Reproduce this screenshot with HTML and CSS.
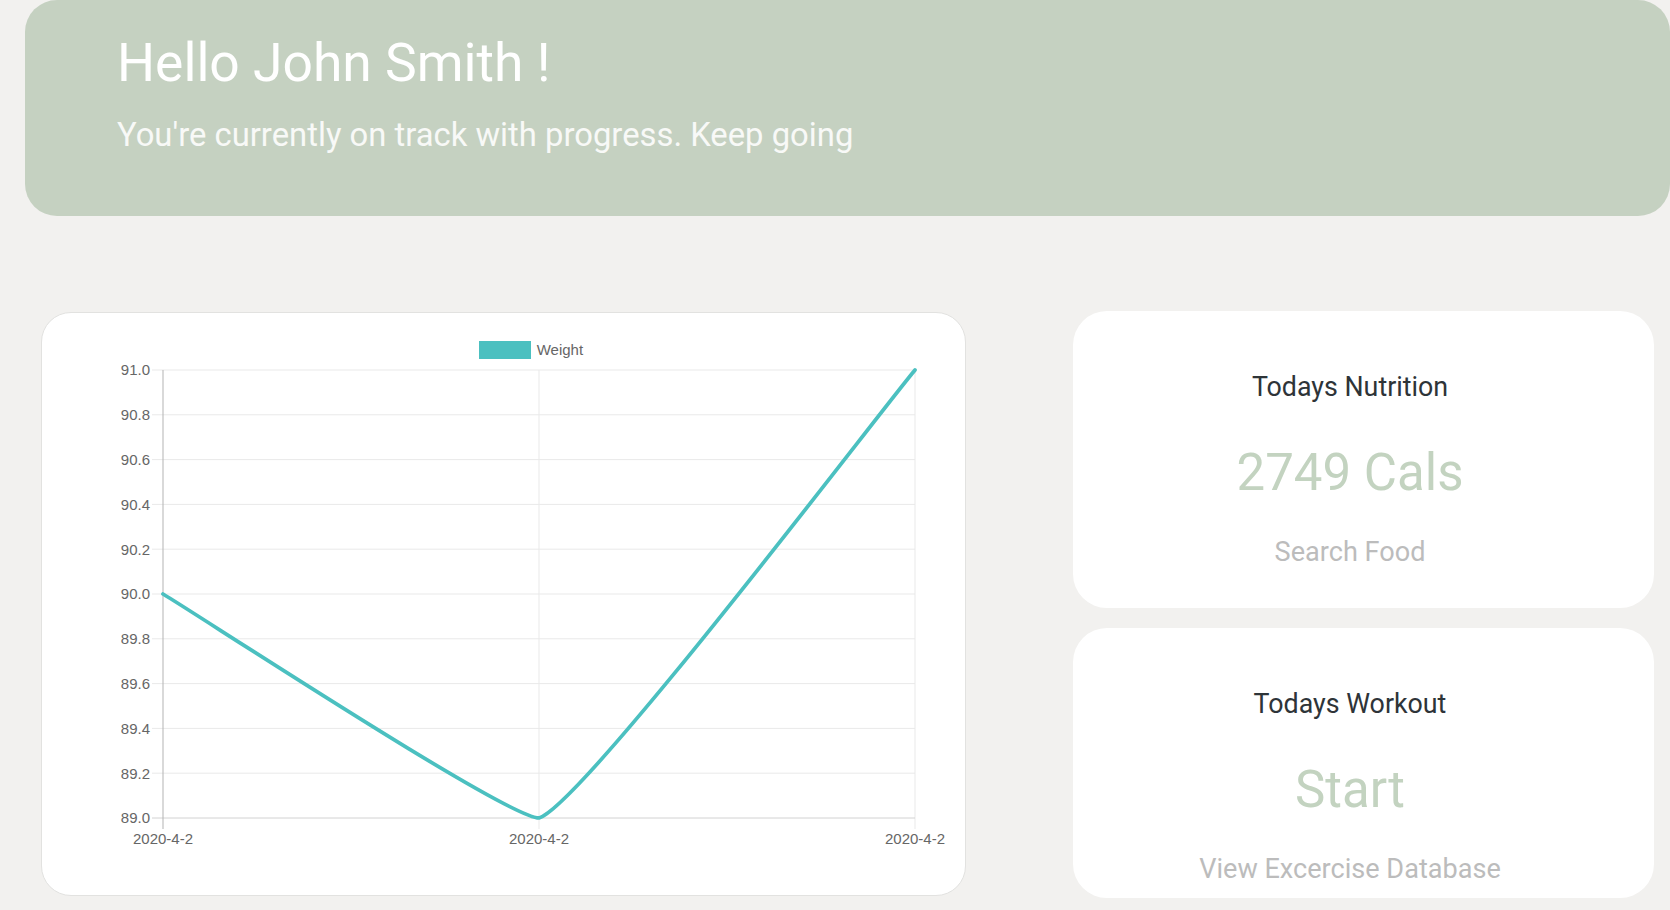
FILE: index.html
```html
<!DOCTYPE html>
<html lang="en">
<head>
<meta charset="utf-8">
<title>Dashboard</title>
<link rel="stylesheet" href="styles.css">
</head>
<body>
<header class="hero">
  <h1 class="hero-title">Hello John Smith !</h1>
  <p class="hero-sub">You're currently on track with progress. Keep going</p>
</header>
<main class="dash">
  <section class="chart-card">
    <svg class="chart" width="923" height="582" viewBox="0 0 923 582">
      <g class="grid">
        <line x1="110" y1="57" x2="873" y2="57"/>
        <line x1="110" y1="101.8" x2="873" y2="101.8"/>
        <line x1="110" y1="146.6" x2="873" y2="146.6"/>
        <line x1="110" y1="191.4" x2="873" y2="191.4"/>
        <line x1="110" y1="236.2" x2="873" y2="236.2"/>
        <line x1="110" y1="281" x2="873" y2="281"/>
        <line x1="110" y1="325.8" x2="873" y2="325.8"/>
        <line x1="110" y1="370.6" x2="873" y2="370.6"/>
        <line x1="110" y1="415.4" x2="873" y2="415.4"/>
        <line x1="110" y1="460.2" x2="873" y2="460.2"/>
        <line x1="497" y1="57" x2="497" y2="516"/>
        <line x1="873" y1="57" x2="873" y2="516"/>
      </g>
      <line class="axis-x" x1="110" y1="505" x2="873" y2="505"/>
      <line class="axis-y" x1="121" y1="57" x2="121" y2="516"/>
      <g class="ylabels">
        <text x="108" y="62.4">91.0</text>
        <text x="108" y="107.2">90.8</text>
        <text x="108" y="152">90.6</text>
        <text x="108" y="196.8">90.4</text>
        <text x="108" y="241.6">90.2</text>
        <text x="108" y="286.4">90.0</text>
        <text x="108" y="331.2">89.8</text>
        <text x="108" y="376">89.6</text>
        <text x="108" y="420.8">89.4</text>
        <text x="108" y="465.6">89.2</text>
        <text x="108" y="510.4">89.0</text>
      </g>
      <g class="xlabels">
        <text x="121" y="531">2020-4-2</text>
        <text x="497" y="531">2020-4-2</text>
        <text x="873" y="531">2020-4-2</text>
      </g>
      <rect class="legend-box" x="437" y="28" width="52" height="18"/>
      <text class="legend-text" x="494.7" y="41.7">Weight</text>
      <path class="series" d="M121 281 C158.6 303.4 464.8 505 497 505 C540 492.2 835.4 101.8 873 57"/>
    </svg>
  </section>
  <div class="side">
    <div class="stat-card">
      <h2 class="stat-title">Todays Nutrition</h2>
      <div class="stat-value">2749 Cals</div>
      <a class="stat-link" href="#">Search Food</a>
    </div>
    <div class="stat-card stat-card--short">
      <h2 class="stat-title">Todays Workout</h2>
      <div class="stat-value">Start</div>
      <a class="stat-link" href="#">View Excercise Database</a>
    </div>
  </div>
</main>
</body>
</html>
```

FILE: styles.css
```css
* { box-sizing: border-box; }
html, body { margin: 0; padding: 0; }
body {
  background: #f2f1ef;
  font-family: Roboto, "Noto Sans", sans-serif;
  width: 1670px;
  height: 910px;
  overflow: hidden;
}
.hero {
  margin-left: 25px;
  height: 216px;
  background: #c5d1c1;
  border-radius: 32px;
  padding: 36px 0 0 92px;
  color: #ffffff;
}
.hero-title {
  margin: 0;
  font-size: 53.4px;
  font-weight: 400;
  line-height: 1;
}
.hero-sub {
  margin: 30px 0 0;
  font-size: 32.8px;
  line-height: 1;
  color: #f8f9f7;
}
.dash {
  display: flex;
  align-items: flex-start;
  margin-top: 96px;
  padding-left: 41px;
  gap: 107px;
}
.chart-card {
  width: 925px;
  height: 584px;
  background: #fff;
  border: 1px solid #e2e2e0;
  border-radius: 30px;
}
.chart { display: block; }
.grid line { stroke: #e9e9e9; stroke-width: 1; }
.axis-x { stroke: #d2d2d2; stroke-width: 1; }
.axis-y { stroke: #b3b3b3; stroke-width: 1; }
.ylabels text {
  font-family: "Liberation Sans", Arial, sans-serif;
  font-size: 15px;
  fill: #666;
  text-anchor: end;
}
.xlabels text {
  font-family: "Liberation Sans", Arial, sans-serif;
  font-size: 15px;
  fill: #666;
  text-anchor: middle;
}
.legend-box { fill: #4bc0c0; }
.legend-text {
  font-family: "Liberation Sans", Arial, sans-serif;
  font-size: 15px;
  fill: #666;
}
.series {
  fill: none;
  stroke: #4bc0c0;
  stroke-width: 3.75;
  stroke-linejoin: round;
  stroke-linecap: round;
}
.side {
  width: 581px;
  display: flex;
  flex-direction: column;
  gap: 20px;
  margin-top: -1px;
}
.stat-card {
  height: 297px;
  background: #fff;
  border-radius: 34px;
  padding: 63px 27px 0 0;
  display: flex;
  flex-direction: column;
  align-items: center;
}
.stat-card--short { height: 270px; }
.stat-title {
  margin: 0;
  font-size: 26.8px;
  font-weight: 400;
  line-height: 1;
  color: #2e3438;
}
.stat-value {
  margin-top: 45.8px;
  font-size: 51px;
  line-height: 1;
  color: #c3d3c0;
}
.stat-link {
  margin-top: 41.5px;
  font-size: 27.1px;
  line-height: 1;
  color: #bcbcbc;
  text-decoration: none;
}
```
